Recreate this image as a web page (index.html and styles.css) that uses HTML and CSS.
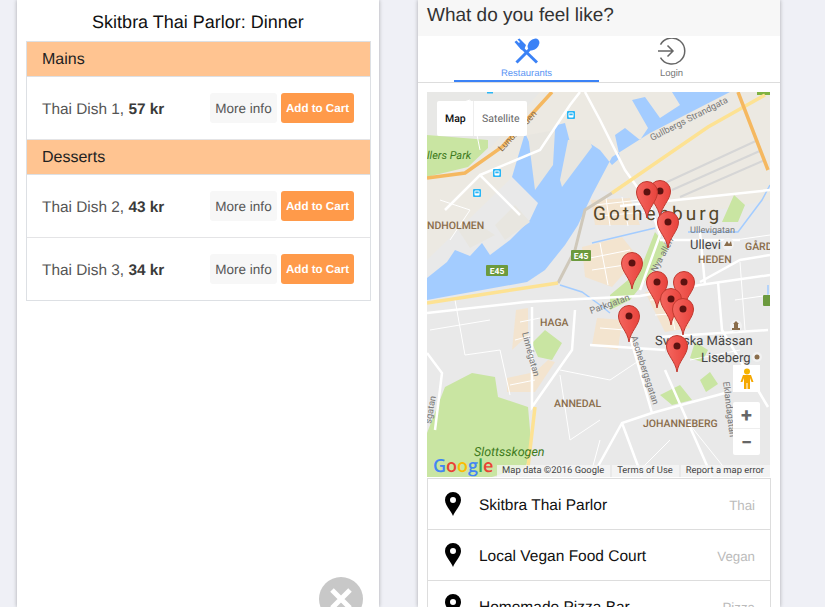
FILE: index.html
```html
<!DOCTYPE html>
<html lang="en">
<head>
    <meta charset="UTF-8">
    <meta name="viewport" content="width=device-width, initial-scale=1.0">
    <title>Skitbra Food</title>
    <link rel="stylesheet" href="styles.css">
</head>
<body>
    <!-- Menu screen -->
    <section class="phone phone-menu">
        <h1 class="menu-title">Skitbra Thai Parlor: Dinner</h1>
        <div class="menu">
            <div class="menu-group">Mains</div>
            <div class="menu-row">
                <span class="dish">Thai Dish 1, <b>57 kr</b></span>
                <button class="more-btn">More info</button>
                <button class="cart-btn">Add to Cart</button>
            </div>
            <div class="menu-group">Desserts</div>
            <div class="menu-row">
                <span class="dish">Thai Dish 2, <b>43 kr</b></span>
                <button class="more-btn">More info</button>
                <button class="cart-btn">Add to Cart</button>
            </div>
            <div class="menu-row">
                <span class="dish">Thai Dish 3, <b>34 kr</b></span>
                <button class="more-btn">More info</button>
                <button class="cart-btn">Add to Cart</button>
            </div>
        </div>
        <div class="close-btn">
            <svg width="24" height="24" viewBox="0 0 24 24"><path d="M3 3 21 21M21 3 3 21" stroke="#fff" stroke-width="5"/></svg>
        </div>
    </section>

    <!-- Restaurant screen -->
    <section class="phone phone-map">
        <header class="top-bar">What do you feel like?</header>
        <nav class="tabs">
            <div class="tab tab-active">
                <svg width="28" height="28" viewBox="0 0 28 28">
                    <path d="M1.500 4 3.500 2.500 6 5 7 4 4.500 1.500 6.500 .5 13 7 11 12 8 11.500Z" fill="#3b82f6"/>
                    <path d="M8 9 24 24.500" stroke="#3b82f6" stroke-width="3"/>
                    <ellipse cx="20.500" cy="6.500" rx="4.800" ry="6.800" transform="rotate(45 20.500 6.500)" fill="#3b82f6"/>
                    <path d="M18 10 3.500 24.500" stroke="#3b82f6" stroke-width="3"/>
                </svg>
                <span>Restaurants</span>
            </div>
            <div class="tab">
                <svg width="30" height="28" viewBox="0 1 30 28">
                    <path d="M3.500 7.500A13 13 0 1 1 3.500 20.500" fill="none" stroke="#666" stroke-width="1.500"/>
                    <path d="M1 14H16M10.500 8.500 16 14 10.500 19.500" fill="none" stroke="#666" stroke-width="1.500"/>
                </svg>
                <span>Login</span>
            </div>
        </nav>

        <div class="map">
            <svg class="map-canvas" width="343" height="385" viewBox="427 92 343 385">
                <defs>
                    <linearGradient id="pin-fill" x1="0" y1="0" x2="1" y2="0">
                        <stop offset="0" stop-color="#f4665f"/>
                        <stop offset="1" stop-color="#e8433c"/>
                    </linearGradient>
                    <g id="pin">
                        <path d="M0 0C-1.500-11-10.500-17-10.500-26A10.500 10.500 0 1 1 10.500-26C10.500-17 1.500-11 0 0Z" fill="url(#pin-fill)" stroke="#c0392f"/>
                        <circle cx="0" cy="-26" r="3.500" fill="#5c1210"/>
                    </g>
                    <g id="bus">
                        <rect x="-4" y="-4" width="8" height="8" rx="1" fill="#29b6f6"/>
                        <rect x="-2.500" y="-2.500" width="5" height="5" rx="1" fill="#fff"/>
                        <rect x="-1.700" y="-1.500" width="3.400" height="1.800" fill="#29b6f6"/>
                    </g>
                </defs>

                <rect x="427" y="92" width="343" height="385" fill="#e9e9e9"/>
                <path d="M427 92H770V200L690 215 600 190 540 150 427 260Z" fill="#ece9e2"/>
                <path d="M427 92H540L480 160 427 180Z" fill="#e8e8e6"/>

                <!-- parks and districts -->
                <path d="M427 135 488 140 488 148 468 167 435 175 427 177ZM427 433 445 387 472 373 495 377 498 397 528 407 532 453 525 467 492 477H427ZM655 232 668 248 650 275 630 300 610 310 610 295 640 270ZM532 343 545 330 562 343 552 360 538 357ZM734 195 745 205 738 222 722 222ZM695 342 708 350 702 362 690 358ZM660 395 680 385 692 400 672 405ZM710 372 718 384 706 392 700 380Z" fill="#c9e5a2"/>
                <path d="M757 92H770V95H757Z" fill="#7fb241"/>
                <path d="M487 92H493V93.500H487Z" fill="#29b6f6"/>
                <path d="M591 200 630 198 640 225 595 225ZM582 247 622 237 638 257 612 287 585 277ZM645 292 680 290 690 328 665 332ZM516 310 528 308 528 335 512 350ZM507 378 535 372 548 360 555 362 535 392 507 392ZM597 318 622 320 618 350 592 345Z" fill="#f3e4cf"/>

                <!-- water -->
                <path d="M685 92H730L650 133 612 157 592 195 578 225 565 245 545 270 527 282 427 300V278L447 262 455 250 470 256 482 243 490 255 510 240 530 220 538 203 525 190 512 177 525 133 533 150 557 125 565 123 572 150 585 140 600 150 612 165 620 158 615 135 625 128 640 140 648 128 632 100 645 97 660 118 680 105 672 92Z" fill="#a3ccff"/>
                <path d="M528 135 555 130 553 165 535 190ZM568 140 590 140 592 147 562 187 560 180ZM455 225 480 225 495 235 470 248ZM515 205 530 222 505 240 495 225Z" fill="#e8e6e0"/>
                <path d="M592 243 655 228M610 313 600 305 582 292 560 285M688 232H738L762 200 770 185M768 300V285" fill="none" stroke="#a3ccff" stroke-width="1.500"/>

                <!-- roads -->
                <path d="M595 205 640 200M600 216 645 212M606 198 610 226M622 197 628 226M590 258 630 250M592 270 625 265M600 243 608 285M650 300 690 296M655 315 695 312M667 290 675 330M600 328 625 330M520 322 540 318M515 340 530 336M510 385 535 380M455 300 465 355 500 350 510 395M560 370 610 380 640 360M560 375 570 440 600 420M430 330 490 320M690 360 740 350M735 240 770 235M740 262 745 330M690 425 730 475M735 300 770 295M600 440 590 477M670 440 640 470M440 110 470 100 480 150M440 200 470 210 450 240" fill="none" stroke="#fff" stroke-width="1"/>
                <path d="M585 92 600 120 625 170 650 205 660 235 640 290M427 313 525 302 560 300 640 296 700 285 770 275M532 307V407L572 350 575 310M427 353 442 373 435 430M630 337 652 413M592 477 622 423 652 413 725 393M665 370 712 477M622 423 642 477M718 282 722 330 768 407M658 337 768 330M620 206 770 190M660 240H740M590 345 665 350M480 175 540 150 570 105 580 92M700 282 740 260 770 255M445 210 480 175 520 215M700 232 705 285" fill="none" stroke="#fff" stroke-width="2.500"/>
                <path d="M665 183 758 140M672 190 762 150M680 197 765 160" fill="none" stroke="#d6d6d6" stroke-width="2"/>
                <path d="M558 283 575 250 585 210 612 193" fill="none" stroke="#cfc8ba" stroke-width="3"/>
                <path d="M612 193 708 127 765 95M427 303 492 293 558 283M535 407 528 467" fill="none" stroke="#fde293" stroke-width="3.500"/>
                <path d="M427 178 465 173 502 147 552 92M738 92 768 170" fill="none" stroke="#f5b860" stroke-width="3.500"/>

                <!-- labels -->
                <text class="lbl-park" x="427" y="159">llers Park</text>
                <text class="lbl-street lbl-brown" transform="translate(502 152) rotate(-47)">Lundbyleden</text>
                <text class="lbl-street" transform="translate(652 141) rotate(-27)">Gullbergs Strandgata</text>
                <text class="lbl-street" transform="translate(656 273) rotate(-62)">Nya allén</text>
                <text class="lbl-street" transform="translate(591 314) rotate(-20)">Parkgatan</text>
                <text class="lbl-street" transform="translate(522 333) rotate(75)">Linnégatan</text>
                <text class="lbl-street" transform="translate(631 337) rotate(72)">Aschebergsgatan</text>
                <text class="lbl-street" transform="translate(723 382) rotate(83)">Eklandagatan</text>
                <text class="lbl-street" transform="translate(431 424) rotate(-80)">sgatan</text>
                <text class="lbl-street" x="690" y="233">Ullevigatan</text>
                <text class="lbl-area" x="427" y="229">NDHOLMEN</text>
                <text class="lbl-area" x="698" y="263">HEDEN</text>
                <text class="lbl-area" x="745" y="250">GÅRD</text>
                <text class="lbl-area" x="540" y="326">HAGA</text>
                <text class="lbl-area" x="554" y="407">ANNEDAL</text>
                <text class="lbl-area" x="643" y="427">JOHANNEBERG</text>
                <text class="lbl-city" x="593" y="220">Gothenburg</text>
                <text class="lbl-place" x="690" y="249">Ullevi</text>
                <text class="lbl-place" x="655" y="345">Svenska Mässan</text>
                <text class="lbl-place" x="701" y="362">Liseberg</text>
                <text class="lbl-park lbl-forest" x="474" y="456">Slottsskogen</text>
                <circle cx="728" cy="244" r="6" fill="#f2f2f2"/>
                <path d="M724 246 727 241 729 244 731 241 732 246Z" fill="#8a6d4b"/>
                <circle cx="736" cy="326" r="6" fill="#f2f2f2"/>
                <path d="M732 330H740V328H738V324H739L736 321 733 324H734V328H732Z" fill="#8a6d4b"/>
                <circle cx="757" cy="357" r="5" fill="#f2f2f2"/>
                <circle cx="757" cy="357" r="2.500" fill="#8a6d4b"/>

                <use href="#bus" x="571" y="115"/>
                <use href="#bus" x="497" y="173"/>
                <use href="#bus" x="477" y="193"/>

                <rect x="486" y="265" width="22" height="11" rx="1" fill="#6c9a3e"/>
                <text class="lbl-road" x="497" y="274">E45</text>
                <rect x="571" y="250" width="20" height="11" rx="1" fill="#6c9a3e"/>
                <text class="lbl-road" x="581" y="259">E45</text>
                <rect x="763" y="295" width="20" height="11" rx="1" fill="#6c9a3e"/>

                <!-- pins -->
                <use href="#pin" x="660" y="217"/>
                <use href="#pin" x="647" y="218"/>
                <use href="#pin" x="668" y="248"/>
                <use href="#pin" x="632" y="289"/>
                <use href="#pin" x="684" y="308"/>
                <use href="#pin" x="657" y="308"/>
                <use href="#pin" x="671" y="325"/>
                <use href="#pin" x="683" y="335"/>
                <use href="#pin" x="629" y="342"/>
                <use href="#pin" x="677" y="372"/>

                <text class="lbl-google" x="433" y="472"><tspan fill="#4285f4">G</tspan><tspan fill="#ea4335">o</tspan><tspan fill="#fbbc05">o</tspan><tspan fill="#4285f4">g</tspan><tspan fill="#34a853">l</tspan><tspan fill="#ea4335">e</tspan></text>
            </svg>

            <div class="map-type">
                <span class="map-type-on">Map</span>
                <span class="map-type-off">Satellite</span>
            </div>
            <div class="pegman">
                <svg width="14" height="22" viewBox="0 0 14 22">
                    <circle cx="7" cy="3.500" r="3" fill="#f5b400"/>
                    <path d="M3 7H11L13.500 14H11.500L10 10V21H7.500V15H6.500V21H4V10L2.500 14H.5Z" fill="#f5a800"/>
                </svg>
            </div>
            <div class="zoom">
                <span class="zoom-in">+</span>
                <span>&minus;</span>
            </div>
            <div class="attrib">
                <span>Map data ©2016 Google</span>
                <span>Terms of Use</span>
                <span>Report a map error</span>
            </div>
        </div>

        <ul class="places">
            <li class="place">
                <svg width="16" height="24" viewBox="0 0 16 24"><path fill-rule="evenodd" d="M8 24C6 19 0 13 0 8A8 8 0 0 1 16 8C16 13 10 19 8 24ZM8 5A3 3 0 1 0 8 11 3 3 0 1 0 8 5Z"/></svg>
                <span class="place-name">Skitbra Thai Parlor</span>
                <span class="place-type">Thai</span>
            </li>
            <li class="place">
                <svg width="16" height="24" viewBox="0 0 16 24"><path fill-rule="evenodd" d="M8 24C6 19 0 13 0 8A8 8 0 0 1 16 8C16 13 10 19 8 24ZM8 5A3 3 0 1 0 8 11 3 3 0 1 0 8 5Z"/></svg>
                <span class="place-name">Local Vegan Food Court</span>
                <span class="place-type">Vegan</span>
            </li>
            <li class="place">
                <svg width="16" height="24" viewBox="0 0 16 24"><path fill-rule="evenodd" d="M8 24C6 19 0 13 0 8A8 8 0 0 1 16 8C16 13 10 19 8 24ZM8 5A3 3 0 1 0 8 11 3 3 0 1 0 8 5Z"/></svg>
                <span class="place-name">Homemade Pizza Bar</span>
                <span class="place-type">Pizza</span>
            </li>
        </ul>
    </section>
</body>
</html>
```

FILE: styles.css
```css
* {
    margin: 0;
    padding: 0;
    box-sizing: border-box;
}

body {
    display: flex;
    align-items: flex-start;
    gap: 39px;
    height: 607px;
    padding-left: 17px;
    overflow: hidden;
    background: #eff0f6;
    font-family: "Liberation Sans", Arial, sans-serif;
    text-rendering: geometricPrecision;
}

.phone {
    position: relative;
    width: 362px;
    height: 607px;
    overflow: hidden;
    background: white;
    box-shadow: 0 0 4px rgba(0, 0, 0, 0.3);
}

/* Menu screen */
.phone-menu {
    padding: 0 9px;
}
.menu-title {
    height: 41px;
    padding-top: 12px;
    font-size: 18px;
    line-height: 21px;
    font-weight: normal;
    text-align: center;
    color: #111;
}
.menu {
    width: 345px;
    border: 1px solid #dde0e4;
}
.menu-group {
    height: 35px;
    padding-left: 15px;
    border-bottom: 1px solid #dde0e4;
    background: #ffc491;
    color: #222;
    font-size: 16px;
    line-height: 36px;
}
.menu-row {
    display: flex;
    align-items: center;
    gap: 4px;
    height: 63px;
    padding: 0 16px 0 15px;
    border-bottom: 1px solid #e4e4e6;
}
.menu-row:last-child {
    border-bottom: none;
    height: 62px;
}
.dish {
    flex: 1;
    margin-top: 3px;
    font-size: 15.400px;
    color: #555;
}
.dish b {
    color: #3a3a3a;
}
.more-btn,
.cart-btn {
    height: 30px;
    border: none;
    border-radius: 3px;
    font-family: inherit;
    text-rendering: geometricPrecision;
}
.more-btn {
    width: 67px;
    background: #f7f7f7;
    color: #555;
    font-size: 13.500px;
}
.cart-btn {
    width: 73px;
    background: #ff9a4a;
    color: white;
    font-size: 11.600px;
    font-weight: bold;
}
.close-btn {
    position: absolute;
    left: 302px;
    top: 577px;
    display: flex;
    align-items: center;
    justify-content: center;
    width: 44px;
    height: 44px;
    border-radius: 50%;
    background: #c8c8c8;
}

/* Restaurant screen */
.top-bar {
    height: 36px;
    padding: 4px 9px 0;
    background: #f7f7f7;
    color: #333;
    font-size: 19px;
    line-height: 23px;
}
.tabs {
    display: flex;
    justify-content: center;
    height: 47px;
    border-bottom: 1px solid #ddd;
}
.tab {
    display: flex;
    flex-direction: column;
    align-items: center;
    width: 145px;
    height: 46px;
    padding-top: 2px;
    color: #777;
    font-size: 9.500px;
}
.tab span {
    margin-top: 2px;
}
.tab-active {
    border-bottom: 2px solid #3b82f6;
    color: #5a94f4;
}
.map {
    position: relative;
    width: 343px;
    height: 385px;
    margin: 9px 0 0 9px;
    overflow: hidden;
    font-family: Roboto, sans-serif;
}
.map-canvas {
    display: block;
}
.map-type {
    position: absolute;
    left: 10px;
    top: 9px;
    display: flex;
    height: 35px;
    border-radius: 2px;
    background: white;
    color: #666;
    font-size: 10.500px;
    line-height: 35px;
}
.map-type span {
    padding: 0 7px 0 8px;
}
.map-type-on {
    width: 37px;
    border-right: 1px solid #eee;
    color: #111;
    font-weight: 500;
}
.pegman {
    position: absolute;
    left: 306px;
    top: 273px;
    display: flex;
    align-items: center;
    justify-content: center;
    width: 27px;
    height: 27px;
    background: white;
}
.zoom {
    position: absolute;
    left: 306px;
    top: 310px;
    display: flex;
    flex-direction: column;
    width: 27px;
    height: 53px;
    border-radius: 2px;
    background: white;
    color: #666;
    font-size: 20px;
    font-weight: bold;
    line-height: 26px;
    text-align: center;
}
.zoom-in {
    border-bottom: 1px solid #eee;
}
.attrib {
    position: absolute;
    right: 0;
    bottom: 0;
    display: flex;
    gap: 2px;
    height: 12px;
    color: #444;
    font-size: 9.400px;
    line-height: 12px;
    white-space: nowrap;
}
.attrib span {
    padding: 0 6px 0 5px;
    background: rgba(245, 245, 245, 0.75);
}
.places {
    width: 344px;
    margin: 1px 0 0 9px;
    list-style: none;
    border-left: 1px solid #ddd;
    border-right: 1px solid #ddd;
    border-top: 1px solid #ddd;
}
.place {
    display: flex;
    align-items: center;
    height: 51px;
    padding: 0 15px 0 17px;
    border-bottom: 1px solid #ddd;
}
.place-name {
    flex: 1;
    margin: 3px 0 0 18px;
    font-size: 15.500px;
    color: #111;
}
.place-type {
    margin-top: 3px;
    font-size: 13.300px;
    color: #bbb;
}

/* Map labels */
.lbl-street {
    font-size: 9.200px;
    fill: #777;
}
.lbl-brown {
    fill: #8a6d4b;
}
.lbl-area {
    font-size: 10.500px;
    font-weight: 500;
    fill: #8a6d4b;
}
.lbl-city {
    font-size: 19px;
    letter-spacing: 3px;
    fill: #54472a;
}
.lbl-place {
    font-size: 13px;
    fill: #444;
}
.lbl-park {
    font-size: 11px;
    font-style: italic;
    fill: #3d7a1c;
}
.lbl-forest {
    font-size: 12.500px;
}
.lbl-road {
    font-size: 8.500px;
    font-weight: bold;
    text-anchor: middle;
    fill: white;
}
.lbl-google {
    font-family: "Open Sans", sans-serif;
    font-size: 18px;
    font-weight: 600;
}
```
